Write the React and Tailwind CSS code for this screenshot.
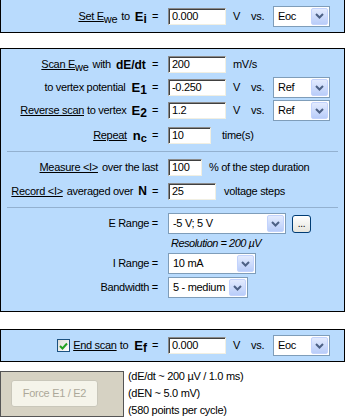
import React from "react";

const Input = ({ cls, v }) => (
  <div
    className={`h-[17px] bg-white border border-t-[#8a8a8a] border-l-[#8a8a8a] border-b-[#f1efe2] border-r-[#f1efe2] shadow-[inset_1px_1px_0_#404040] flex items-center pl-[3px] leading-none text-black ${cls}`}
  >
    {v}
  </div>
);

const Chevron = () => (
  <svg width="9" height="6" viewBox="0 0 9 6">
    <polyline points="1,1 4.5,4.5 8,1" fill="none" stroke="#4d6185" strokeWidth="2" />
  </svg>
);

const Select = ({ cls, v }) => (
  <div className={`h-[21px] bg-white border border-[#7f9db9] flex items-stretch ${cls}`}>
    <div className="flex-1 flex items-center pl-[4px] leading-none whitespace-nowrap overflow-hidden">{v}</div>
    <div className="w-[17px] shrink-0 m-[1px] rounded-[2px] border border-[#c3d3fd] bg-gradient-to-b from-[#e3ebfe] to-[#b9cdf9] flex items-center justify-center">
      <Chevron />
    </div>
  </div>
);

const E = ({ s }) => (
  <span className="font-bold text-[13px] leading-none tracking-normal">
    E<span className="relative top-[2px] text-[12px]">{s}</span>
  </span>
);

const We = () => <span className="relative top-[3px]">we</span>;

const Label = ({ children, cls = "" }) => (
  <div className={`w-[167px] shrink-0 flex justify-end items-center pr-[10px] whitespace-nowrap ${cls}`}>
    {children}
  </div>
);

const VVs = ({ sel }) => (
  <>
    <span className="ml-[7px] w-[18px]">V</span>
    <span className="w-[22px]">vs.</span>
    <Select cls="w-[57px]" v={sel} />
  </>
);

const Sep = ({ cls }) => <div className={`mx-[6px] h-px bg-[#93b1d0] ${cls}`} />;

export default function App() {
  return (
    <div className="w-[345px] h-[418px] bg-white text-[11px] tracking-[-0.3px] text-black font-['Liberation_Sans',Arial,sans-serif] leading-none overflow-hidden">
      {/* Panel 1 */}
      <div className="h-[33px] bg-[#b9dbfd] border-x border-b border-black flex items-center">
        <Label>
          <u>Set E</u>
          <We />
          <span className="ml-[4px] mr-[5px]">to</span>
          <E s="i" />
          <span className="ml-[5px]">=</span>
        </Label>
        <Input cls="w-[58px]" v="0.000" />
        <VVs sel="Eoc" />
      </div>

      {/* Panel 2 */}
      <div className="mt-[15px] h-[264px] bg-[#b9dbfd] border border-black pt-[4px]">
        <div className="flex items-center h-[23px]">
          <Label>
            <u>Scan E</u>
            <We />
            <span className="ml-[4px] mr-[5px]">with</span>
            <b className="text-[12px] tracking-normal">dE/dt</b>
            <span className="ml-[6px]">=</span>
          </Label>
          <Input cls="w-[58px]" v="200" />
          <span className="ml-[7px]">mV/s</span>
        </div>
        <div className="flex items-center h-[23px]">
          <Label>
            <span className="mr-[6px]">to vertex potential</span>
            <E s="1" />
            <span className="ml-[5px]">=</span>
          </Label>
          <Input cls="w-[58px]" v="-0.250" />
          <VVs sel="Ref" />
        </div>
        <div className="flex items-center h-[23px]">
          <Label>
            <u>Reverse scan</u>
            <span className="ml-[3px] mr-[5px]">to vertex</span>
            <E s="2" />
            <span className="ml-[5px]">=</span>
          </Label>
          <Input cls="w-[58px]" v="1.2" />
          <VVs sel="Ref" />
        </div>
        <div className="flex items-center h-[22px] mt-[2px]">
          <Label>
            <u>Repeat</u>
            <span className="ml-[6px] font-bold text-[13px] tracking-normal">
              n<span className="relative top-[2px] text-[11px]">c</span>
            </span>
            <span className="ml-[5px]">=</span>
          </Label>
          <Input cls="w-[43px]" v="10" />
          <span className="ml-[11px]">time(s)</span>
        </div>
        <Sep cls="mt-[5px]" />
        <div className="flex items-center h-[24px] mt-[3px]">
          <Label>
            <u>Measure &lt;I&gt;</u>
            <span className="ml-[4px]">over the last</span>
          </Label>
          <Input cls="w-[34px]" v="100" />
          <span className="ml-[7px]">% of the step duration</span>
        </div>
        <div className="flex items-center h-[24px]">
          <Label>
            <u>Record &lt;I&gt;</u>
            <span className="ml-[4px] mr-[5px]">averaged over</span>
            <b className="text-[12px] tracking-normal">N</b>
            <span className="ml-[5px]">=</span>
          </Label>
          <Input cls="w-[48px]" v="25" />
          <span className="ml-[8px]">voltage steps</span>
        </div>
        <Sep cls="mt-[4px]" />
        <div className="flex items-center mt-[5px]">
          <Label>E Range =</Label>
          <Select cls="w-[118px]" v="-5 V; 5 V" />
          <div className="ml-[6px] w-[19px] h-[18px] rounded-[3px] border border-[#003c74] bg-gradient-to-b from-[#ffffff] to-[#e6e5dd] flex items-end justify-center pb-[3px] text-[10px]">
            ...
          </div>
        </div>
        <div className="h-[19px] flex items-center pl-[170px] italic text-[11px] tracking-[-0.5px]">
          Resolution = 200 µV
        </div>
        <div className="flex items-center">
          <Label>I Range =</Label>
          <Select cls="w-[88px]" v="10 mA" />
        </div>
        <div className="flex items-center mt-[3px]">
          <Label>Bandwidth =</Label>
          <Select cls="w-[80px]" v="5 - medium" />
        </div>
      </div>

      {/* Panel 3 */}
      <div className="mt-[17px] h-[33px] bg-[#b9dbfd] border border-black flex items-center">
        <Label>
          <div className="w-[13px] h-[13px] border border-[#1c5180] bg-gradient-to-br from-[#dcdcd7] to-white flex items-center justify-center mr-[3px]">
            <svg width="9" height="8" viewBox="0 0 9 8">
              <polyline points="1,4 3.5,6.5 8,1.5" fill="none" stroke="#21a121" strokeWidth="2" />
            </svg>
          </div>
          <u>End scan</u>
          <span className="ml-[3px] mr-[6px]">to</span>
          <E s="f" />
          <span className="ml-[5px]">=</span>
        </Label>
        <Input cls="w-[58px]" v="0.000" />
        <VVs sel="Eoc" />
      </div>

      {/* Bottom */}
      <div className="flex mt-[6px]">
        <div className="mt-[3px] w-[124px] h-[46px] border border-[#555555] bg-[#d6d2c3] pl-[10px] pt-[8px]">
          <div className="w-[87px] h-[27px] rounded-[3px] border border-[#c9c7ba] bg-[#f5f4ea] flex items-center justify-center text-[#aca899]">
            Force E1 / E2
          </div>
        </div>
        <div className="ml-[4px] leading-[17px] text-[11px]">
          <div>(dE/dt ~ 200 µV / 1.0 ms)</div>
          <div>(dEN ~ 5.0 mV)</div>
          <div>(580 points per cycle)</div>
        </div>
      </div>
    </div>
  );
}
